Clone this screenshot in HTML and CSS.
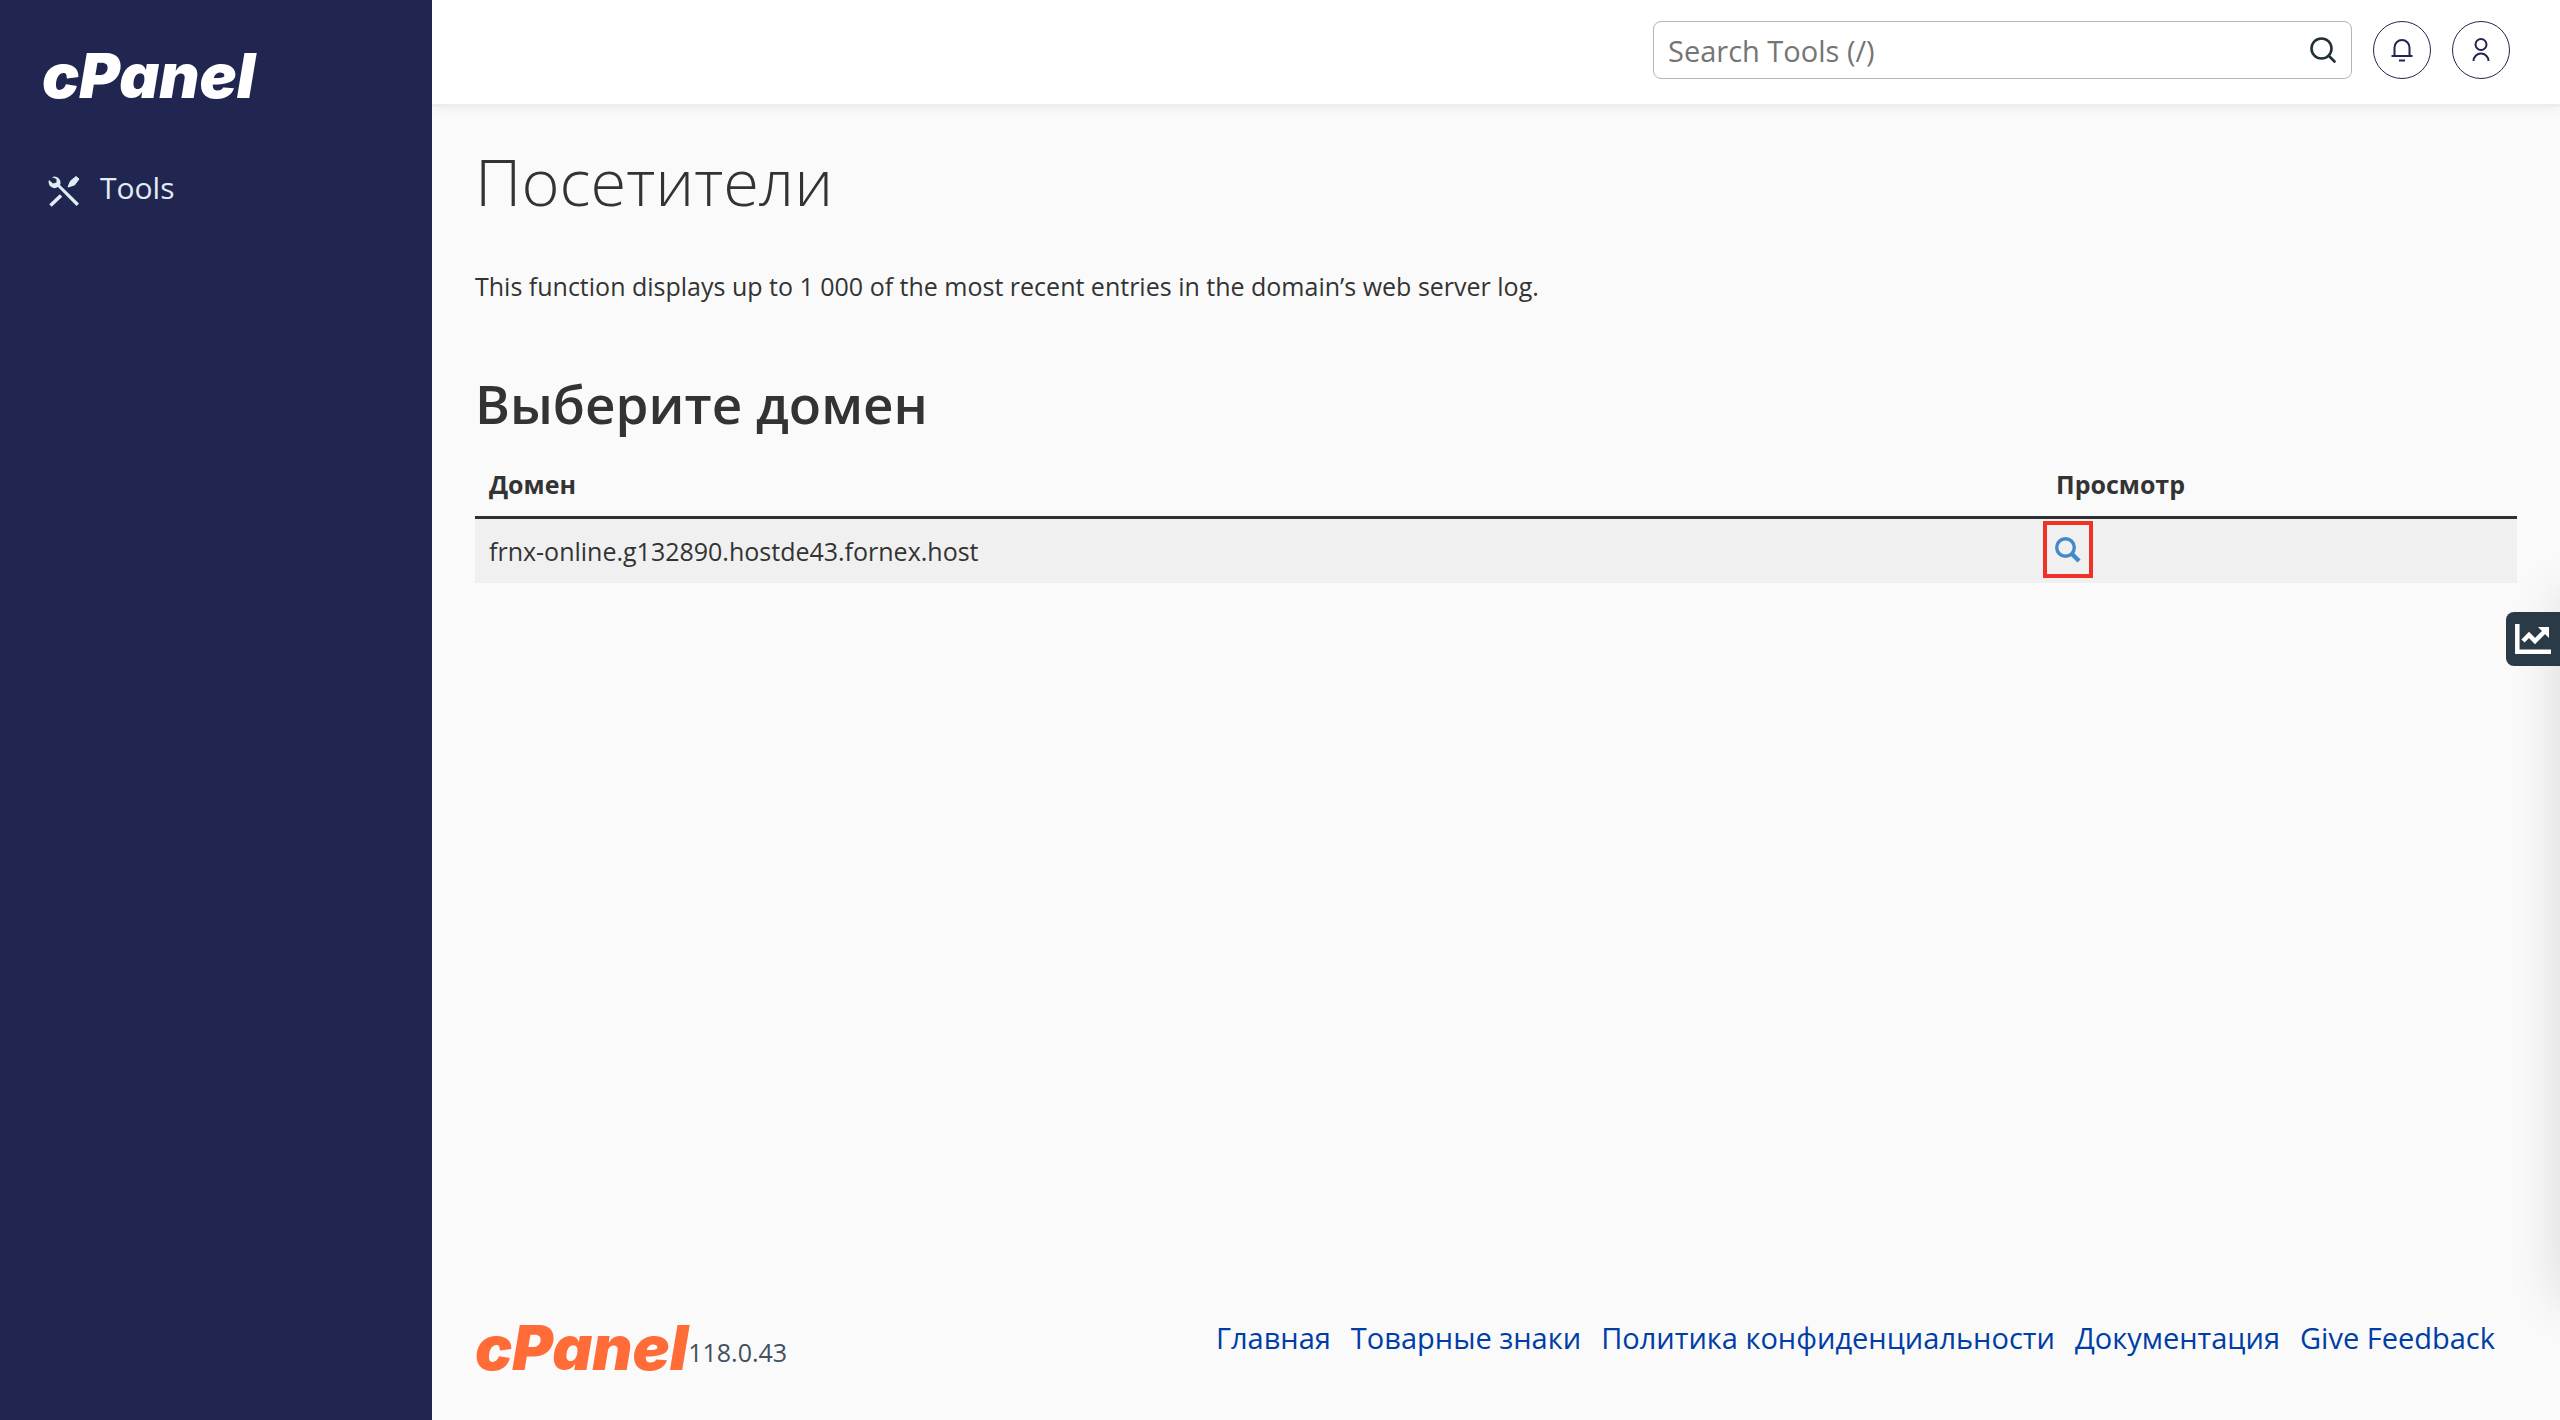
FILE: index.html
```html
<!DOCTYPE html>
<html lang="ru">
<head>
    <meta charset="UTF-8">
    <meta name="viewport" content="width=device-width, initial-scale=1.0">
    <title>cPanel - Посетители</title>
    <link rel="stylesheet" href="styles.css">
</head>
<body>
    <div class="layout">
        <nav class="sidebar">
            <a href="#" class="logo">cPanel</a>
            <a href="#" class="nav-link">
                <svg class="nav-icon" viewBox="0 0 32 32" aria-hidden="true">
                    <path d="M4 2.200A6 6 0 0 1 12 10L31 28.500L28.500 31L10 12A6 6 0 0 1 1 5L5 8.500L8.500 7.500V4z" fill="currentColor"/>
                    <path d="M2.500 30.500L13 20.500" stroke="currentColor" stroke-width="3.600"/>
                    <path d="M20 12L22.500 6L28 1.500L31 4L26.500 10z" fill="currentColor" stroke="currentColor" stroke-linejoin="round"/>
                </svg>
                <span>Tools</span>
            </a>
        </nav>

        <div class="content">
            <header class="topbar">
                <form class="search" role="search">
                    <input type="search" class="search-input" placeholder="Search Tools (/)" aria-label="Search Tools">
                    <button type="button" class="search-button" aria-label="Search">
                        <svg viewBox="0 0 26 26" fill="none" stroke="currentColor" stroke-width="2.600" stroke-linecap="round">
                            <circle cx="11.500" cy="11.500" r="10"/>
                            <path d="M19 19L24.500 24.500"/>
                        </svg>
                    </button>
                </form>
                <button type="button" class="round-button" aria-label="Notifications">
                    <svg viewBox="0 0 26 26" fill="none" stroke="currentColor" stroke-width="2">
                        <path d="M5.500 19V10.500a7.500 7.500 0 0 1 15 0V19M2.500 19h21M10 23.500h6"/>
                    </svg>
                </button>
                <button type="button" class="round-button" aria-label="Account">
                    <svg viewBox="0 0 26 26" fill="none" stroke="currentColor" stroke-width="2">
                        <circle cx="13" cy="7.500" r="5.500"/>
                        <path d="M5.500 24a7.500 7.500 0 0 1 15 0"/>
                    </svg>
                </button>
            </header>

            <main class="page">
                <h1>Посетители</h1>
                <p>This function displays up to 1 000 of the most recent entries in the domain’s web server log.</p>

                <h2>Выберите домен</h2>
                <table class="domains">
                    <thead>
                        <tr>
                            <th>Домен</th>
                            <th class="col-view">Просмотр</th>
                        </tr>
                    </thead>
                    <tbody>
                        <tr>
                            <td>frnx-online.g132890.hostde43.fornex.host</td>
                            <td class="view-cell">
                                <a href="#" class="view-link" aria-label="Просмотр">
                                    <svg viewBox="0 0 26 26" fill="none" stroke="currentColor">
                                        <circle cx="10.500" cy="10.500" r="8.800" stroke-width="3.400"/>
                                        <path d="M17 17L24 24" stroke-width="4.400"/>
                                    </svg>
                                </a>
                            </td>
                        </tr>
                    </tbody>
                </table>
            </main>

            <footer class="footer">
                <div class="brand">
                    <a href="#" class="logo logo-orange">cPanel</a>
                    <span class="version">118.0.43</span>
                </div>
                <div class="footer-links">
                    <a href="#">Главная</a>
                    <a href="#">Товарные знаки</a>
                    <a href="#">Политика конфиденциальности</a>
                    <a href="#">Документация</a>
                    <a href="#">Give Feedback</a>
                </div>
            </footer>
        </div>
    </div>

    <!-- Statistics panel, closed -->
    <aside class="stats-panel"></aside>
    <button type="button" class="stats-toggle" aria-label="Statistics">
        <svg viewBox="0 0 36 30" fill="none" stroke="#fff" stroke-width="4.500">
            <path d="M2.300 0V27.700H36"/>
            <path d="M8 17L14 11L20 17L30 7"/>
            <path d="M23 3H34V14z" fill="#fff" stroke="none"/>
        </svg>
    </button>
</body>
</html>
```
FILE: styles.css
```css
* {
    box-sizing: border-box;
}
body {
    font-family: "Open Sans", "Noto Sans", sans-serif;
    font-size: 25px;
    line-height: 36px;
    color: #333333;
    background-color: #fafafa;
    margin: 0;
}
a {
    color: #003da6;
    text-decoration: none;
}
button {
    padding: 0;
    border: none;
    background: none;
    cursor: pointer;
}
svg {
    display: block;
}
.layout {
    display: flex;
    min-height: 100vh;
}

/* Sidebar */
.sidebar {
    flex: 0 0 432px;
    z-index: 1;
    padding: 40px 42px;
    background-color: #202650;
}
.logo {
    display: block;
    font-family: Inter, sans-serif;
    font-size: 62px;
    font-weight: 900;
    font-style: italic;
    line-height: 72px;
    color: #ffffff;
}
.logo-orange {
    color: #ff6c37;
}
.nav-link {
    display: flex;
    align-items: flex-end;
    gap: 20px;
    margin-top: 57px;
    padding-left: 6px;
    font-size: 30px;
    line-height: 38px;
    color: #e1edf5;
}
.nav-icon {
    width: 32px;
    height: 32px;
}

/* Header */
.content {
    flex: 1;
    min-width: 0;
    display: flex;
    flex-direction: column;
}
.topbar {
    display: flex;
    justify-content: flex-end;
    align-items: center;
    gap: 21px;
    height: 104px;
    padding: 0 50px 4px;
    background-color: #ffffff;
    box-shadow: 0 3px 0 #ededed, 0 4px 12px rgba(0, 0, 0, 0.06);
}
.search {
    display: flex;
    align-items: center;
    width: 699px;
    height: 58px;
    border: 1px solid #b5b5b5;
    border-radius: 8px;
}
.search-input {
    flex: 1;
    padding: 0 14px;
    border: none;
    outline: none;
    background: none;
    font-family: inherit;
    font-size: 29px;
    color: #333333;
}
.search-input::placeholder {
    color: #757575;
}
.search-button {
    width: 26px;
    margin-right: 15px;
    color: #1f303a;
}
.round-button {
    display: flex;
    align-items: center;
    justify-content: center;
    width: 58px;
    height: 58px;
    border: 1px solid #202650;
    border-radius: 50%;
    color: #202650;
}
.round-button svg {
    width: 26px;
}

/* Page */
.page {
    flex: 1;
    padding: 32px 43px;
}
h1 {
    margin: 0 0 42px;
    font-size: 65px;
    font-weight: 300;
    line-height: 90px;
}
p {
    margin: 0 0 62px;
}
h2 {
    margin: 0 0 10px;
    font-size: 53px;
    font-weight: 600;
    line-height: 76px;
}
.domains {
    width: 100%;
    border-collapse: separate;
    border-spacing: 0;
    text-align: left;
}
.domains th,
.domains td {
    padding: 14px;
}
.domains th {
    border-bottom: 3px solid #2d3133;
}
.domains td {
    background-color: #f0f0f0;
}
.domains .col-view {
    width: 475px;
}
.domains .view-cell {
    padding: 2px 1px 5px;
}
.view-link {
    display: flex;
    align-items: center;
    justify-content: center;
    width: 50px;
    height: 57px;
    border: 4px solid #f03226;
    color: #428bca;
}
.view-link svg {
    width: 26px;
}

/* Footer */
.footer {
    display: flex;
    justify-content: space-between;
    align-items: center;
    padding: 0 65px 36px 43px;
}
.brand {
    display: flex;
    align-items: center;
}
.version {
    padding-top: 8px;
    color: #42505e;
}
.footer-links {
    display: flex;
    gap: 20px;
    padding-bottom: 20px;
    font-size: 29px;
    line-height: 40px;
}

/* Statistics */
.stats-panel {
    position: fixed;
    top: 596px;
    bottom: 120px;
    left: 100%;
    width: 400px;
    box-shadow: 0 0 50px rgba(0, 0, 0, 0.14);
}
.stats-toggle {
    position: fixed;
    top: 612px;
    right: 0;
    width: 54px;
    height: 54px;
    padding-left: 9px;
    border-radius: 8px 0 0 8px;
    background-color: #2b3a47;
}
.stats-toggle svg {
    width: 36px;
}
```
